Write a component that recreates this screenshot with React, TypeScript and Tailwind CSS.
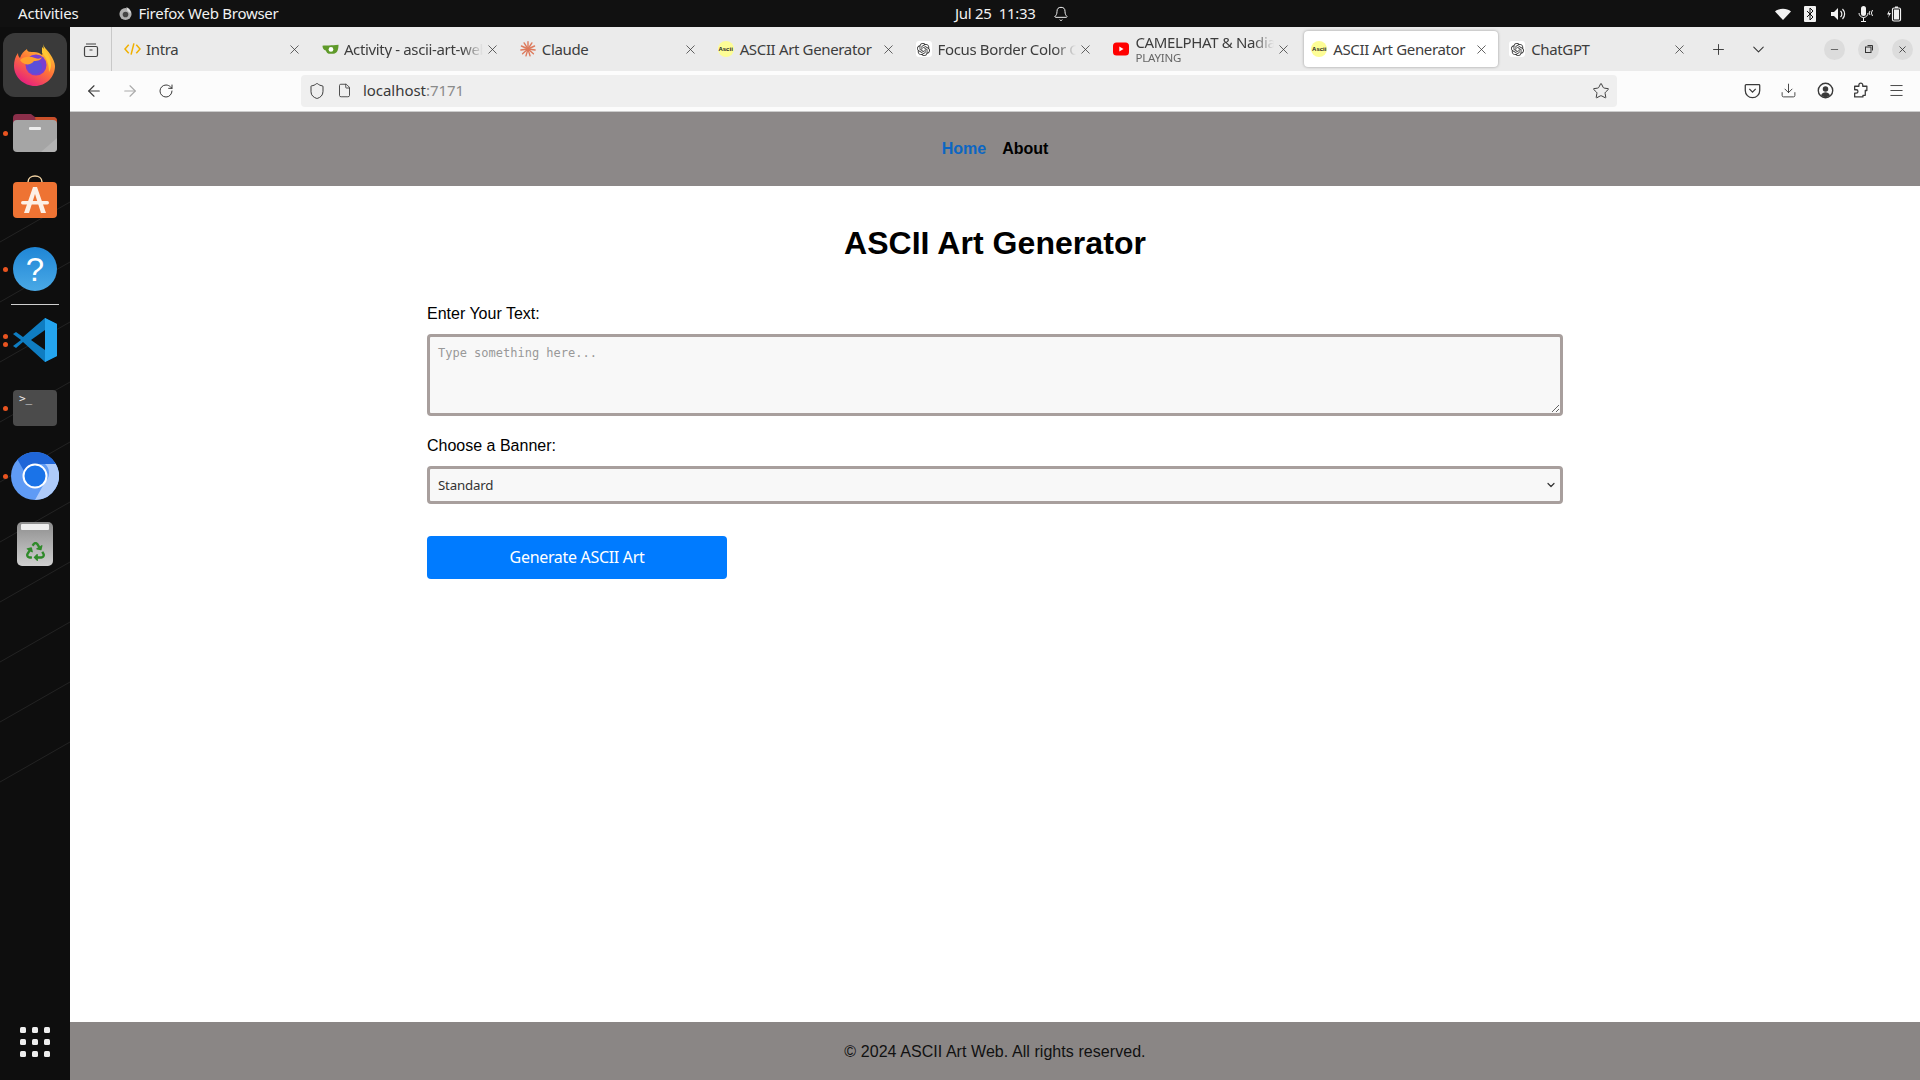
import React from "react";
import { ArrowLeft, ArrowRight, RotateCw, Shield, File, Star, Download, Menu, X, Plus, ChevronDown, Minus, Bell } from "lucide-react";
import { SiOpenai } from "react-icons/si";
import { FaRecycle } from "react-icons/fa";

const ui = "font-['Noto_Sans',sans-serif]";

function OpenAIIcon() {
  return (
    <span className="flex h-[16px] w-[16px] shrink-0 items-center justify-center rounded-[3px] bg-white text-[#333]">
      <SiOpenai size={13} />
    </span>
  );
}

function AsciiIcon() {
  return (
    <span className="flex h-[16px] w-[16px] shrink-0 items-center justify-center rounded-full bg-[#fdfd96] font-['Liberation_Sans',sans-serif] text-[6px] leading-none font-bold text-[#222]">
      Ascii
    </span>
  );
}

function IntraIcon() {
  return (
    <svg viewBox="0 0 18 16" width="17" height="16" className="shrink-0" fill="none" stroke="#f0b000" strokeWidth="1.6">
      <path d="M5 3.5 1 8l4 4.5M13 3.5 17 8l-4 4.5M10.5 2 7.5 14" />
    </svg>
  );
}

function GiteaIcon() {
  return (
    <svg viewBox="0 0 18 16" width="17" height="16" className="shrink-0">
      <path d="M0.5 4.5C4 4 10 4.5 17.5 3.5c0 4-1 9.500-5.500 9.500H8C5 13 4.500 10 4 9.500 2 9 0.500 7.500 0.500 4.500z" fill="#5f9a2a" />
      <circle cx="9.500" cy="8.500" r="2.500" fill="#fff" />
    </svg>
  );
}

function ClaudeIcon() {
  const rays = Array.from({ length: 11 }, (_, i) => (i * 360) / 11);
  return (
    <svg viewBox="0 0 16 16" width="16" height="16" className="shrink-0">
      {rays.map((a) => (
        <line key={a} x1="8" y1="8" x2="8" y2="0.800" stroke="#dd7a5c" strokeWidth="1.400" strokeLinecap="round" transform={`rotate(${a} 8 8)`} />
      ))}
    </svg>
  );
}

function YouTubeIcon() {
  return (
    <svg viewBox="0 0 16 14" width="16" height="14" className="shrink-0">
      <rect x="0" y="0.500" width="16" height="13" rx="3.500" fill="#f00" />
      <path d="M6.300 4.500v5l4.200-2.500z" fill="#fff" />
    </svg>
  );
}

function Tab({ icon, title, sub, active, fade }: { icon: React.ReactNode; title: string; sub?: string; active?: boolean; fade?: boolean }) {
  return (
    <div className="flex h-full w-0 min-w-0 flex-1 items-center px-[2px] py-[4px]">
      <div className={`relative flex h-full w-full items-center rounded-[4px] pr-[9px] pl-[7px] ${active ? "bg-white shadow-[0_0_3px_rgba(0,0,0,0.35)]" : ""}`}>
        <span className="flex w-[22px] shrink-0 items-center">{icon}</span>
        <div className={`min-w-0 flex-1 whitespace-nowrap ${fade ? "overflow-hidden [mask-image:linear-gradient(to_right,black_85%,transparent)]" : ""}`}>
          <div className={`text-[15px] leading-[17px] tracking-[-0.35px] text-[#3d3d3d] ${ui}`}>{title}</div>
          {sub && <div className={`text-[11.500px] leading-[14px] tracking-[-0.2px] text-[#666] ${ui}`}>{sub}</div>}
        </div>
        <X size={15} strokeWidth={1.200} className="ml-[2px] shrink-0 text-[#333]" />
      </div>
    </div>
  );
}

function TopBar() {
  return (
    <div className={`relative flex h-[27px] shrink-0 items-center bg-[#111111] text-[15px] tracking-[-0.2px] text-[#f2f2f2] ${ui}`}>
      <span className="ml-[18px]">Activities</span>
      <svg viewBox="0 0 16 16" width="15" height="15" className="ml-[39px]">
        <circle cx="8" cy="8.500" r="6.500" fill="#b0b0b0" />
        <circle cx="8" cy="9" r="3" fill="#444" />
        <path d="M9 1c3 1.500 5 4 4.500 7L10 5z" fill="#ddd" />
      </svg>
      <span className="ml-[6px] tracking-[-0.27px]">Firefox Web Browser</span>
      <div className="absolute left-[955px] flex items-center">
        <span className="tracking-[-0.3px]">Jul 25&nbsp;&nbsp;11:33</span>
        <Bell size={16} strokeWidth={1.500} className="ml-[17px]" />
      </div>
      <div className="absolute left-[1775px] flex items-center">
        <svg viewBox="0 0 16 14" width="16" height="14"><path d="M0 4.500C4 0.800 12 0.800 16 4.500L8 13z" fill="#f2f2f2" /></svg>
        <svg viewBox="0 0 12 16" width="12" height="18" className="ml-[13px]">
          <rect width="12" height="16" rx="1" fill="#f2f2f2" />
          <path d="M3 5l6 6-3 3V2l3 3-6 6" fill="none" stroke="#111" strokeWidth="1" />
        </svg>
        <svg viewBox="0 0 16 14" width="16" height="14" className="ml-[14px]">
          <path d="M1 5h3l4-4v12l-4-4H1z" fill="#f2f2f2" />
          <path d="M10.500 4a4 4 0 0 1 0 6M12.500 2a7 7 0 0 1 0 10" fill="none" stroke="#f2f2f2" strokeWidth="1.200" />
        </svg>
        <svg viewBox="0 0 18 16" width="18" height="16" className="ml-[11px]">
          <rect x="4" y="0" width="5" height="10" rx="2.500" fill="#f2f2f2" />
          <path d="M2 7a4.500 4.500 0 0 0 9 0M6.500 11.500V15M4 15.500h5M13 5a3 3 0 0 0 0 4M15.500 4a5 5 0 0 0 0 6" fill="none" stroke="#f2f2f2" strokeWidth="1" />
        </svg>
        <svg viewBox="0 0 16 16" width="16" height="16" className="ml-[11px]">
          <path d="M3.500 4 1 8.500h2L2 12l3-5H3z" fill="#f2f2f2" />
          <rect x="6.500" y="2" width="8" height="13" rx="1.500" fill="none" stroke="#f2f2f2" strokeWidth="1.200" />
          <rect x="8" y="3.500" width="5" height="10" fill="#f2f2f2" />
          <rect x="9" y="0.500" width="3" height="1.500" fill="#f2f2f2" />
        </svg>
      </div>
    </div>
  );
}

function Slot({ children, dots = 1 }: { children: React.ReactNode; dots?: number }) {
  return (
    <div className="relative flex h-[68px] w-full items-center justify-center">
      {dots > 0 && (
        <div className="absolute left-[3px] flex flex-col gap-[3px]">
          {Array.from({ length: dots }, (_, i) => (
            <span key={i} className="h-[5px] w-[5px] rounded-full bg-[#e95420]" />
          ))}
        </div>
      )}
      {children}
    </div>
  );
}

function Dock() {
  return (
    <div className="relative flex w-[70px] shrink-0 flex-col overflow-hidden bg-[#0e0e0e] pt-[4px]">
      <svg className="absolute inset-0 h-full w-full" aria-hidden="true">
        {[180, 240, 300, 360, 420, 480, 540, 600, 660, 720].map((y) => (
          <line key={y} x1="0" y1={y + 35} x2="70" y2={y - 5} stroke="#232323" strokeWidth="1" />
        ))}
      </svg>
      <Slot>
        <div className="absolute left-[3px] flex h-[64px] w-[64px] items-center justify-center rounded-[12px] bg-[#3a3a3a]">
          <svg viewBox="0 0 44 44" width="44" height="44">
            <defs>
              <linearGradient id="ff" x1="0.800" y1="0" x2="0.200" y2="1">
                <stop offset="0" stopColor="#ffd92f" />
                <stop offset="0.500" stopColor="#ff7139" />
                <stop offset="1" stopColor="#e31587" />
              </linearGradient>
            </defs>
            <path d="M30 1c1 4 4 5 7 10 3 4 5 9 5 12 0 11-9 20-20 20S1 34 1 23c0-5 1-9 4-13 0 3 1 4 2 5 1-4 4-7 7-9 0 3 3 3 7 3 3 0 6 1 8 3 2-3 2-7 1-11z" fill="url(#ff)" />
            <circle cx="23" cy="22" r="10.500" fill="#7a3fd0" />
            <circle cx="22" cy="24" r="7" fill="#5b4fd8" />
            <path d="M7 17c4-4 10-4 15-2 3 1 5 1 7-1-1 3-4 4-8 4-2 3-6 4-9 3-2-1-4-2-5-4z" fill="#ffa02e" />
            <path d="M29 4c4 4 9 10 9 18 0 3-1 5-2 7 0-9-3-15-7-19z" fill="#ffc832" />
          </svg>
        </div>
      </Slot>
      <Slot>
        <svg viewBox="0 0 44 42" width="44" height="42">
          <path d="M0 6a4 4 0 0 1 4-4h14l4 3h18a4 4 0 0 1 4 4v12H0z" fill="#8b2f4a" />
          <path d="M22 5h18a4 4 0 0 1 4 4v8H24z" fill="#c9502a" />
          <rect x="0" y="8" width="44" height="32" rx="4" fill="#a5a5a5" />
          <path d="M44 26v10a4 4 0 0 1-4 4H28z" fill="#b3b3b3" />
          <rect x="16" y="15" width="12" height="3" rx="1" fill="#eee" />
        </svg>
      </Slot>
      <Slot dots={0}>
        <svg viewBox="0 0 44 44" width="44" height="44" className="mb-[8px]">
          <path d="M15 7C15 -1 29 -1 29 7" fill="none" stroke="#f3d3a3" strokeWidth="1.500" />
          <rect x="0" y="7" width="44" height="36" rx="4" fill="#ee7333" />
          <path d="M20 12h4l9 26h-5l-6-19-6 19h-5z" fill="#fdf0e6" />
          <rect x="8" y="26" width="28" height="3.500" rx="1.700" fill="#fdf0e6" />
        </svg>
      </Slot>
      <Slot>
        <div className="flex h-[44px] w-[44px] items-center justify-center rounded-full bg-[linear-gradient(#1f86d6,#4aa9e6)] font-['Liberation_Sans',sans-serif] text-[33px] leading-none text-white">
          ?
        </div>
      </Slot>
      <div className="relative mx-[11px] my-[1px] h-[1px] bg-[#cfcfcf]" />
      <Slot dots={2}>
        <svg viewBox="0 0 44 44" width="44" height="44">
          <path d="M32 0 44 6v32L32 44 10 24l-7 6-3-2 8-6-8-6 3-2 7 5z" fill="#0f7dc2" />
          <path d="M32 0 44 6v32L32 44z" fill="#24a4ee" />
          <path d="M32 12 18 22l14 10z" fill="#0e0e0e" />
        </svg>
      </Slot>
      <Slot>
        <div className="flex h-[36px] w-[44px] flex-col rounded-[4px] bg-[#4b4b4b] px-[6px] pt-[2px] font-['DejaVu_Sans_Mono',monospace] text-[11px] leading-[14px] text-[#eee]">
          &gt;_
        </div>
      </Slot>
      <Slot>
        <svg viewBox="0 0 48 48" width="48" height="48">
          <circle cx="24" cy="24" r="24" fill="#5f9bf5" />
          <path d="M24 0a24 24 0 0 1 20.800 12H24a12 12 0 0 0-11 7L6.500 7.500A24 24 0 0 1 24 0z" fill="#1f66d8" />
          <path d="M44.800 12A24 24 0 0 1 24 48l10-18a12 12 0 0 0 0-18z" fill="#aecbfa" />
          <circle cx="24" cy="24" r="11.500" fill="#1a73e8" stroke="#fff" strokeWidth="2" />
        </svg>
      </Slot>
      <Slot dots={0}>
        <div className="relative flex h-[44px] w-[36px] items-end justify-center rounded-[5px] bg-[linear-gradient(#8d8d8d,#d0d0d0)] pb-[5px] text-[#2f8a2a]">
          <span className="absolute top-[2px] left-[4px] h-[6px] w-[28px] rounded-[1px] bg-[#eeeeee]" />
          <FaRecycle size={19} />
        </div>
      </Slot>
      <div className="relative mt-auto mb-[23px] ml-[20px] grid w-[30px] grid-cols-3 gap-[6px]">
        {Array.from({ length: 9 }, (_, i) => (
          <span key={i} className="h-[6px] w-[6px] rounded-[1.500px] bg-[#eeeeee]" />
        ))}
      </div>
    </div>
  );
}

function Browser() {
  return (
    <div className="shrink-0">
      <div className="flex h-[44px] items-center bg-[#ebebeb]">
        <div className="flex h-full w-[42px] shrink-0 items-center justify-center border-r border-[#c8c8c8] pt-[2px]">
          <svg viewBox="0 0 16 16" width="16" height="16" fill="none" stroke="#444" strokeWidth="1.200">
            <rect x="1.500" y="4.500" width="13" height="10" rx="1.500" />
            <path d="M3 2h10M6.500 8h3" />
          </svg>
        </div>
        <div className="ml-[3px] flex h-full w-[1583px] shrink-0">
          <Tab icon={<IntraIcon />} title="Intra" />
          <Tab icon={<GiteaIcon />} title="Activity - ascii-art-web" fade />
          <Tab icon={<ClaudeIcon />} title="Claude" />
          <Tab icon={<AsciiIcon />} title="ASCII Art Generator" />
          <Tab icon={<OpenAIIcon />} title="Focus Border Color Change" fade />
          <Tab icon={<YouTubeIcon />} title="CAMELPHAT & Nadia Rose" sub="PLAYING" fade />
          <Tab icon={<AsciiIcon />} title="ASCII Art Generator" active />
          <Tab icon={<OpenAIIcon />} title="ChatGPT" />
        </div>
        <Plus size={17} strokeWidth={1.300} className="ml-[12px] text-[#333]" />
        <ChevronDown size={19} strokeWidth={1.300} className="ml-[22px] text-[#333]" />
        <div className="ml-[56px] flex items-center gap-[13px]">
          {[
            <Minus key="m" size={11} strokeWidth={1.500} />,
            <svg key="r" viewBox="0 0 10 10" width="10" height="10" fill="none" stroke="#333"><rect x="1.500" y="3" width="5.500" height="5.500" /><path d="M3.500 1.500h5v5" /></svg>,
            <X key="x" size={11} strokeWidth={1.800} />,
          ].map((c, i) => (
            <span key={i} className="flex h-[21px] w-[21px] items-center justify-center rounded-full bg-[#dcdcdc] text-[#333]">
              {c}
            </span>
          ))}
        </div>
      </div>
      <div className="flex h-[41px] items-center border-b border-[#cccccc] bg-[#fcfcfc] pb-[1px] text-[#3a3a3a]">
        <ArrowLeft size={18} strokeWidth={1.500} className="ml-[15px]" />
        <ArrowRight size={18} strokeWidth={1.500} className="ml-[18px] text-[#aaaaaa]" />
        <RotateCw size={16} strokeWidth={1.500} className="ml-[19px]" />
        <div className="ml-[127px] flex h-[32px] w-[1316px] items-center rounded-[4px] bg-[#efefef]">
          <Shield size={18} strokeWidth={1.300} className="ml-[7px]" />
          <File size={15} strokeWidth={1.400} className="ml-[11px]" />
          <span className={`ml-[11px] text-[15px] tracking-[-0.05px] text-[#3a3a3a] ${ui}`}>
            localhost<span className="text-[#8a8a8a]">:7171</span>
          </span>
          <Star size={18} strokeWidth={1.300} className="mr-[7px] ml-auto" />
        </div>
        <svg viewBox="0 0 16 16" width="17" height="17" fill="none" stroke="#3a3a3a" strokeWidth="1.200" className="ml-[127px]">
          <path d="M2 2.500h12a.8.8 0 0 1 .8.8V8a6.800 6.800 0 0 1-13.600 0V3.300a.8.8 0 0 1 .8-.8z" />
          <path d="M5 6.500 8 9.500l3-3" />
        </svg>
        <Download size={17} strokeWidth={1.300} className="ml-[19px]" />
        <svg viewBox="0 0 16 16" width="17" height="17" className="ml-[20px]" fill="#3a3a3a">
          <circle cx="8" cy="8" r="6.800" fill="none" stroke="#3a3a3a" strokeWidth="1.300" />
          <circle cx="8" cy="6.500" r="2.600" />
          <path d="M3.800 12.500c1-2 2.500-2.800 4.200-2.800s3.200.8 4.200 2.800C11 13.800 9.500 14.300 8 14.300s-3-.5-4.200-1.800z" />
        </svg>
        <svg viewBox="0 0 16 16" width="17" height="17" className="ml-[18px]" fill="none" stroke="#3a3a3a" strokeWidth="1.200" strokeLinejoin="round">
          <path d="M6.500 4V2.800a1.800 1.800 0 0 1 3.600 0V4H14v4h-1.500v4.500H10.300v1.500H2.500v-3.500H4a1.600 1.600 0 0 0 0-3.200H2.500V4z" />
        </svg>
        <Menu size={17} strokeWidth={1.300} className="ml-[19px]" />
      </div>
    </div>
  );
}

function Page() {
  return (
    <div className="flex min-h-0 flex-1 flex-col bg-white font-['Liberation_Sans',sans-serif] text-black">
      <nav className="flex h-[74px] shrink-0 items-center justify-center gap-[16px] bg-[#8c8888] text-[16px] font-bold">
        <a className="text-[#0b66c3]">Home</a>
        <a className="text-black">About</a>
      </nav>
      <main className="flex-1">
        <h1 className="mt-[39px] text-center text-[32px] leading-[37px] font-bold tracking-[0.05px]">ASCII Art Generator</h1>
        <form className="mx-auto mt-[43px] flex w-[1136px] flex-col">
          <label className="text-[16px] leading-[18px]">Enter Your Text:</label>
          <textarea
            placeholder="Type something here..."
            className="mt-[11px] h-[82px] rounded-[4px] border-[3px] border-[#a89f9d] bg-[#f8f8f8] px-[8px] py-[7px] font-['DejaVu_Sans_Mono',monospace] text-[12px] placeholder:text-[#999999]"
          />
          <label className="mt-[21px] text-[16px] leading-[18px]">Choose a Banner:</label>
          <div className="relative mt-[11px]">
            <select className={`h-[38px] w-full appearance-none rounded-[4px] border-[3px] border-[#a89f9d] bg-[#f8f8f8] px-[8px] pt-[1px] text-[13.300px] tracking-[-0.2px] text-[#333] ${ui}`}>
              <option>Standard</option>
            </select>
            <ChevronDown size={12} strokeWidth={2.400} className="absolute top-[13px] right-[6px] text-[#333]" />
          </div>
          <button type="button" className={`mt-[32px] h-[43px] w-[300px] rounded-[4px] bg-[#007bff] pb-[1px] text-[16px] tracking-[-0.32px] text-white ${ui}`}>
            Generate ASCII Art
          </button>
        </form>
      </main>
      <footer className="flex h-[58px] shrink-0 items-center justify-center bg-[#8a8685] pt-[1px] text-[16px] tracking-[0.06px] text-[#111]">
        © 2024 ASCII Art Web. All rights reserved.
      </footer>
    </div>
  );
}

export default function App() {
  return (
    <div className="flex h-[1080px] w-[1920px] flex-col overflow-hidden">
      <TopBar />
      <div className="flex min-h-0 flex-1">
        <Dock />
        <div className="flex min-w-0 flex-1 flex-col">
          <Browser />
          <Page />
        </div>
      </div>
    </div>
  );
}
